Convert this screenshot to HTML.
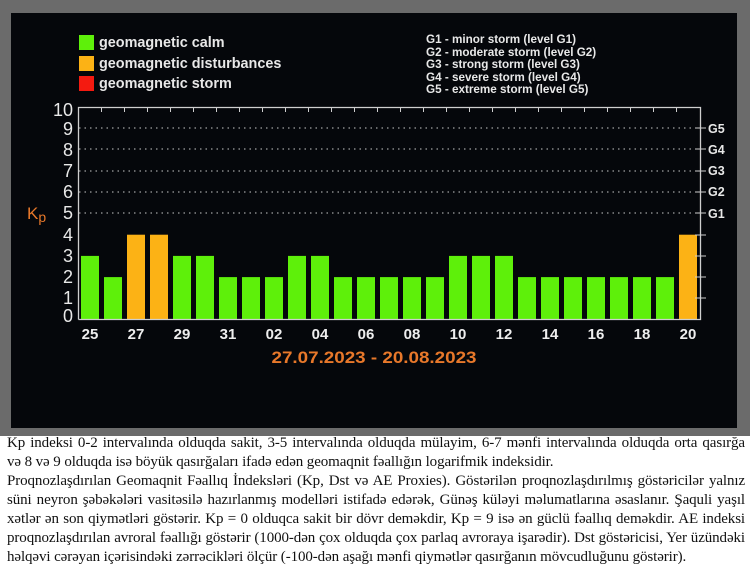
<!DOCTYPE html>
<html><head><meta charset="utf-8"><style>
html,body{margin:0;padding:0;width:750px;height:569px;overflow:hidden;background:#fff}
.frame{position:absolute;left:0;top:0;width:750px;height:436px;background:#6b6b6b}
.panel{position:absolute;left:11px;top:13px;width:726px;height:415px;background:#05070b}
svg{position:absolute;left:0;top:0}
.txt{position:absolute;left:7px;top:434px;width:738px;font-family:"Liberation Serif",serif;font-size:15px;line-height:19px;color:#111;text-align:justify;letter-spacing:-0.1px}
.txt p{margin:0}
.nw{white-space:nowrap}
</style></head><body>
<div class="frame"></div><div class="panel"></div>
<svg width="750" height="437" xmlns="http://www.w3.org/2000/svg" font-family="Liberation Sans, sans-serif">
<rect x="79" y="35" width="15" height="15" fill="#5ef00a"/>
<rect x="79" y="56" width="15" height="15" fill="#fcb215"/>
<rect x="79" y="76" width="15" height="15" fill="#f41a10"/>
<g fill="#e8e8e8" font-weight="bold" font-size="14.4">
<text x="99" y="47">geomagnetic calm</text>
<text x="99" y="68">geomagnetic disturbances</text>
<text x="99" y="88">geomagnetic storm</text>
</g>
<g fill="#e8e8e8" font-weight="bold" font-size="11.7">
<text x="426" y="43">G1 - minor storm (level G1)</text>
<text x="426" y="56">G2 - moderate storm (level G2)</text>
<text x="426" y="68">G3 - strong storm (level G3)</text>
<text x="426" y="81">G4 - severe storm (level G4)</text>
<text x="426" y="93">G5 - extreme storm (level G5)</text>
</g>
<g stroke="#c8c8c8" stroke-width="1" stroke-dasharray="1.5 4">
<line x1="79" y1="128" x2="700" y2="128"/><line x1="79" y1="149" x2="700" y2="149"/>
<line x1="79" y1="171" x2="700" y2="171"/><line x1="79" y1="192" x2="700" y2="192"/>
<line x1="79" y1="213" x2="700" y2="213"/>
</g>
<g id="bars"></g>
<path d="M78.5 319.5V107.5H700.5V319.5H78.5" fill="none" stroke="#cfcfcf" stroke-width="1.3"/>
<g stroke="#cfcfcf" stroke-width="1">
<path d="M101.5 107v5M124.5 107v5M147.5 107v5M170.5 107v5M193.5 107v5M216.5 107v5M239.5 107v5M262.5 107v5M285.5 107v5M308.5 107v5M331.5 107v5M354.5 107v5M377.5 107v5M400.5 107v5M423.5 107v5M446.5 107v5M469.5 107v5M492.5 107v5M515.5 107v5M538.5 107v5M561.5 107v5M584.5 107v5M607.5 107v5M630.5 107v5M653.5 107v5M676.5 107v5"/>
<path d="M695 298h11M695 277h11M695 256h11M695 235h11M695 213h11M695 192h11M695 171h11M695 149h11M695 128h11"/>
</g>
<g fill="#e8e8e8" font-size="18" text-anchor="end">
<text x="73" y="116">10</text><text x="73" y="135">9</text><text x="73" y="156">8</text>
<text x="73" y="177">7</text><text x="73" y="198">6</text><text x="73" y="219">5</text>
<text x="73" y="241">4</text><text x="73" y="262">3</text><text x="73" y="283">2</text>
<text x="73" y="304">1</text><text x="73" y="322">0</text>
</g>
<text x="27" y="219" fill="#e8782a" font-size="17">K<tspan font-size="14" dy="3">p</tspan></text>
<g fill="#e8e8e8" font-weight="bold" font-size="12.5">
<text x="708" y="133">G5</text><text x="708" y="154">G4</text><text x="708" y="175">G3</text>
<text x="708" y="196">G2</text><text x="708" y="218">G1</text>
</g>
<g fill="#eeeeee" font-weight="bold" font-size="15" text-anchor="middle" id="lbl"></g>
<text x="374" y="363" fill="#e8782a" font-weight="bold" font-size="17" text-anchor="middle" textLength="205" lengthAdjust="spacingAndGlyphs">27.07.2023 - 20.08.2023</text>
</svg>
<div class="txt">
<p>Kp indeksi 0-2 intervalında olduqda sakit, 3-5 intervalında olduqda mülayim, 6-7 mənfi intervalında olduqda orta qasırğa <span class="nw">və 8 və</span> 9 olduqda isə böyük qasırğaları ifadə edən geomaqnit fəallığın logarifmik indeksidir.</p>
<p>Proqnozlaşdırılan Geomaqnit Fəallıq İndeksləri (Kp, Dst və AE Proxies). Göstərilən proqnozlaşdırılmış göstəricilər yalnız süni neyron şəbəkələri vasitəsilə hazırlanmış modelləri istifadə edərək, Günəş küləyi məlumatlarına əsaslanır. Şaquli yaşıl xətlər ən son qiymətləri göstərir. Kp = 0 olduqca sakit bir dövr deməkdir, Kp = 9 isə ən güclü fəallıq deməkdir. AE indeksi proqnozlaşdırılan avroral fəallığı göstərir (1000-dən çox olduqda çox parlaq avroraya işarədir). Dst göstəricisi, Yer üzündəki həlqəvi cərəyan içərisindəki zərrəcikləri ölçür (-100-dən aşağı mənfi qiymətlər qasırğanın mövcudluğunu göstərir).</p>
</div>
<script>
var v=[3,2,4,4,3,3,2,2,2,3,3,2,2,2,2,2,3,3,3,2,2,2,2,2,2,2,4];
var ns="http://www.w3.org/2000/svg",g=document.getElementById("bars"),l=document.getElementById("lbl");
var labs=["25","27","29","31","02","04","06","08","10","12","14","16","18","20"];
for(var i=0;i<v.length;i++){var r=document.createElementNS(ns,"rect");var h=v[i]*21.2;
r.setAttribute("x",81+i*23.0);r.setAttribute("y",319.5-h);r.setAttribute("width",18);r.setAttribute("height",h);
r.setAttribute("fill",v[i]>=4?"#fcb215":"#5ef00a");g.appendChild(r);
if(i%2==0){var t=document.createElementNS(ns,"text");t.setAttribute("x",90+i*23.0);t.setAttribute("y",339);t.textContent=labs[i/2];l.appendChild(t);}}
</script>
</body></html>
